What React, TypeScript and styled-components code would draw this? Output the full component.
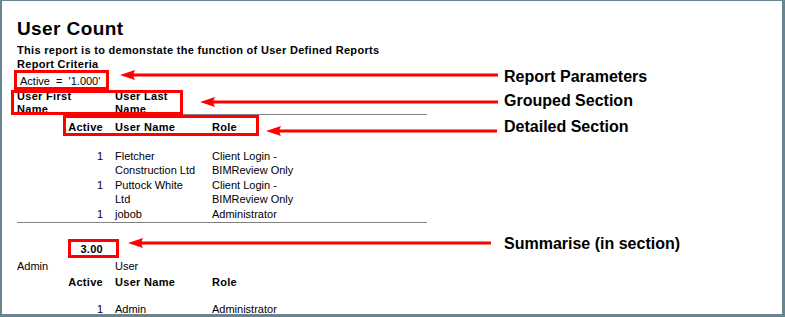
import React from 'react';
import styled, { createGlobalStyle } from 'styled-components';

const GlobalStyle = createGlobalStyle`
    html, body {
        margin:0;
        padding:0;
        background:#ffffff;
    }
`;

const REPORT_FONT = `"Liberation Sans", Arial, sans-serif`;

interface DetailRow {
    active:number;
    name:string[];
    role:string[];
}

const firstGroup:DetailRow[] = [
    { active:1, name:['Fletcher', 'Construction Ltd'], role:['Client Login -', 'BIMReview Only'] },
    { active:1, name:['Puttock White', 'Ltd'], role:['Client Login -', 'BIMReview Only'] },
    { active:1, name:['jobob'], role:['Administrator'] },
];

// 주석 (빨간 상자 + 화살표)
interface BoxSpec { left:number; top:number; width:number; height:number }
const boxes:BoxSpec[] = [
    { left:14, top:70, width:95, height:20 },
    { left:11, top:90, width:172, height:25 },
    { left:63, top:115, width:196, height:21 },
    { left:68, top:239, width:51, height:19 },
];

interface CalloutSpec { left:number; top:number; length:number; gap:number; shift:number; label:string }
const callouts:CalloutSpec[] = [
    { left:120, top:75, length:378, gap:6, shift:2, label:'Report Parameters' },
    { left:200, top:102, length:298, gap:6, shift:-1.5, label:'Grouped Section' },
    { left:266, top:131, length:231, gap:7, shift:-4.5, label:'Detailed Section' },
    { left:128, top:243, length:363, gap:13, shift:1, label:'Summarise (in section)' },
];

const Arrow=({length}:{length:number})=>(
    <svg width={length} height={12} viewBox={`0 0 ${length} 12`}>
        <path d={`M0 6 L15 1 Q12 6 15 11 Z`} fill="#ff0000"/>
        <rect x={12} y={4.5} width={length - 12} height={3} fill="#ff0000"/>
    </svg>
);

const Lines=({lines}:{lines:string[]})=>(
    <>
        {lines.map((l, i)=>(<div key={i}>{l}</div>))}
    </>
);

const App=()=>{
    return(
        <Page>
            <GlobalStyle/>
            <Report>
                <Title>User Count</Title>
                <Subtitle>This report is to demonstate the function of User Defined Reports</Subtitle>
                <Criteria>Report Criteria</Criteria>
                <Param>Active&nbsp; = &nbsp;'1.000'</Param>

                <GroupHeader>
                    <GroupCell><Lines lines={['User First', 'Name']}/></GroupCell>
                    <GroupCell><Lines lines={['User Last', 'Name']}/></GroupCell>
                </GroupHeader>
                <DetailGrid bold top={5}>
                    <ActiveCell>Active</ActiveCell>
                    <div>User Name</div>
                    <div>Role</div>
                </DetailGrid>
                <Rows>
                    {firstGroup.map((r, i)=>(
                        <DetailGrid key={i}>
                            <ActiveCell>{r.active}</ActiveCell>
                            <div><Lines lines={r.name}/></div>
                            <div><Lines lines={r.role}/></div>
                        </DetailGrid>
                    ))}
                </Rows>
                <Divider/>
                <DetailGrid bold top={19}>
                    <ActiveCell>3.00</ActiveCell>
                </DetailGrid>

                <SimpleGroup>
                    <GroupCell>Admin</GroupCell>
                    <GroupCell>User</GroupCell>
                </SimpleGroup>
                <DetailGrid bold top={2}>
                    <ActiveCell>Active</ActiveCell>
                    <div>User Name</div>
                    <div>Role</div>
                </DetailGrid>
                <Rows top={13}>
                    <DetailGrid>
                        <ActiveCell>1</ActiveCell>
                        <div>Admin</div>
                        <div>Administrator</div>
                    </DetailGrid>
                </Rows>
            </Report>

            {boxes.map((b, i)=>(
                <RedBox key={i} {...b}/>
            ))}
            {callouts.map((c, i)=>(
                <Callout key={i} left={c.left} top={c.top}>
                    <Arrow length={c.length}/>
                    <Label gap={c.gap} shift={c.shift}>{c.label}</Label>
                </Callout>
            ))}
        </Page>
    );
}

const Page = styled.div`
    position:relative;
    width:785px;
    height:317px;
    box-sizing:border-box;
    overflow:hidden;
    background:#ffffff;
    border-style:solid;
    border-color:#68868f;
    border-width:1px 3px 3px 2px;
`;

const Report = styled.div`
    width:410px;
    padding:17px 0 0 15px;
    font-family:${REPORT_FONT};
    font-size:11px;
    color:#000000;
`;

const Title = styled.div`
    font-size:19px;
    line-height:22px;
    font-weight:bold;
    letter-spacing:0.4px;
`;

const Subtitle = styled.div`
    margin-top:3px;
    font-weight:bold;
    line-height:14px;
    letter-spacing:0.3px;
`;

const Criteria = styled.div`
    font-weight:bold;
    line-height:14px;
    letter-spacing:0.3px;
`;

const Param = styled.div`
    margin-top:3px;
    padding-left:3px;
    line-height:14px;
`;

const GroupHeader = styled.div`
    display:grid;
    grid-template-columns:98px 1fr;
    height:24px;
    margin-top:1.5px;
    border-bottom:1px solid #808080;
    font-weight:bold;
    letter-spacing:0.3px;
    line-height:13px;
`;

const SimpleGroup = styled.div`
    display:grid;
    grid-template-columns:98px 1fr;
    margin-top:3px;
    line-height:14px;
`;

const GroupCell = styled.div`
    white-space:nowrap;
`;

const DetailGrid = styled.div<{ bold?:boolean; top?:number }>`
    display:grid;
    grid-template-columns:87px 108px 1fr;
    margin-top:${p => p.top ?? 0}px;
    font-weight:${p => p.bold ? 'bold' : 'normal'};
    letter-spacing:${p => p.bold ? '0.3px' : '0'};
    line-height:14px;
    white-space:nowrap;

    & > div:nth-child(2) {
        padding-left:11px;
    }
`;

const ActiveCell = styled.div`
    text-align:right;
    padding-right:1px;
`;

const Rows = styled.div<{ top?:number }>`
    display:flex;
    flex-direction:column;
    gap:1px;
    margin-top:${p => p.top ?? 15}px;
`;

const Divider = styled.div`
    margin-top:1px;
    border-top:1px solid #808080;
`;

const RedBox = styled.div<BoxSpec>`
    position:absolute;
    left:${p => p.left - 2}px;
    top:${p => p.top - 1}px;
    width:${p => p.width}px;
    height:${p => p.height}px;
    box-sizing:border-box;
    border:3px solid #ff0000;
`;

const Callout = styled.div<{ left:number; top:number }>`
    position:absolute;
    left:${p => p.left - 2}px;
    top:${p => p.top - 7}px;
    display:flex;
    align-items:center;
    height:12px;
`;

const Label = styled.span<{ gap:number; shift:number }>`
    margin-left:${p => p.gap}px;
    transform:translateY(${p => p.shift}px);
    font-family:"Liberation Sans", Arial, sans-serif;
    font-size:16px;
    font-weight:bold;
    color:#000000;
    white-space:nowrap;
`;

export default App;
